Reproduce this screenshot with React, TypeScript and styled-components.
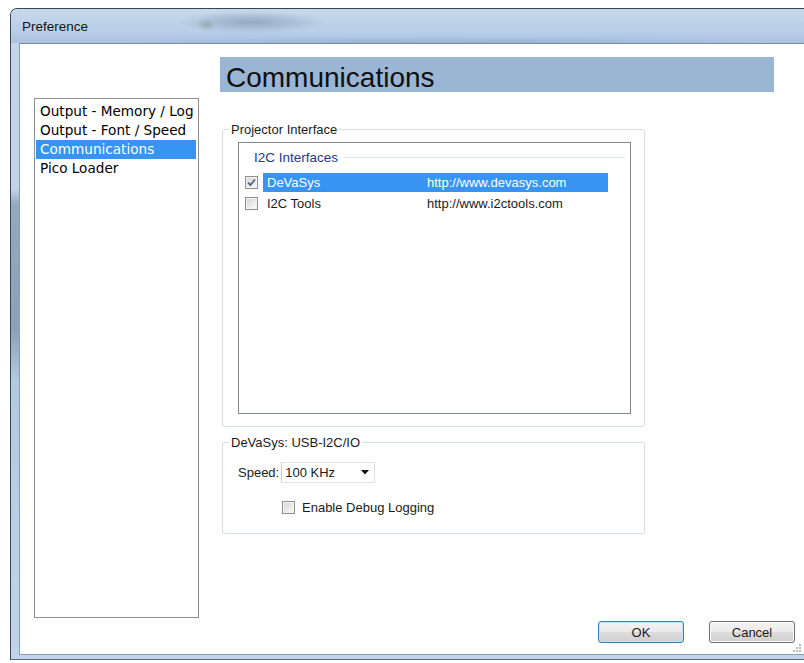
import styled, { createGlobalStyle } from "styled-components";

const GlobalStyle = createGlobalStyle`
  html, body {
    margin: 0;
    padding: 0;
    background: #ffffff;
  }
  body {
    width: 804px;
    height: 663px;
    overflow: hidden;
    font-family: "Liberation Sans", Arial, sans-serif;
    color: #1b1b1b;
  }
`;

const Window = styled.div`
  margin: 8px 0 0 10px;
  width: 794px;
  height: 652px;
  box-sizing: border-box;
  display: flex;
  flex-direction: column;
  border-top: 1px solid #3a4452;
  border-left: 1px solid #3a4452;
  border-bottom: 1px solid #5a6a80;
  border-top-left-radius: 7px;
  overflow: hidden;
  background: linear-gradient(
    to bottom,
    #c2d5ea 0px,
    #c0d4ea 180px,
    #93a8c1 196px,
    #8ba1bb 320px,
    #b2c9e4 372px,
    #bfd4ec 100%
  );
`;

const TitleBar = styled.div`
  height: 34px;
  flex: none;
  display: flex;
  align-items: center;
  padding: 1px 0 0 11px;
  box-sizing: border-box;
  font-size: 13.5px;
  color: #141414;
  background:
    radial-gradient(ellipse 75px 11px at 240px 13px, rgba(85, 108, 132, 0.4), transparent),
    radial-gradient(ellipse 9px 6px at 195px 16px, rgba(100, 135, 85, 0.35), transparent),
    radial-gradient(ellipse 330px 9px at 430px 36px, rgba(105, 140, 188, 0.38), transparent),
    linear-gradient(to bottom, #c6d8ec 0%, #b9cfe8 65%, #a9c2df 100%);
`;

const Client = styled.div`
  position: relative;
  flex: 1;
  display: flex;
  flex-direction: column;
  margin: 0 0 4px 8px;
  border-top: 1px solid #7b8ca2;
  border-left: 1px solid #8a9cb2;
  border-bottom: 1px solid #8a9cb2;
  background: #ffffff;
`;

const Body = styled.div`
  display: flex;
  align-items: flex-start;
  padding-left: 14px;
`;

const PageList = styled.div`
  width: 165px;
  height: 520px;
  margin-top: 54px;
  box-sizing: border-box;
  border: 1px solid #8d9096;
  padding: 3px 2px 0 1px;
  font-family: "DejaVu Sans", Verdana, sans-serif;
  font-size: 13.6px;
`;

const PageItem = styled.div<{ $selected?: boolean }>`
  height: 19px;
  line-height: 19px;
  padding-left: 4px;
  white-space: nowrap;
  color: ${(p) => (p.$selected ? "#ffffff" : "#000000")};
  background: ${(p) => (p.$selected ? "#3894f2" : "transparent")};
`;

const Main = styled.div`
  width: 554px;
  margin: 13px 0 0 21px;
  display: flex;
  flex-direction: column;
`;

const Header = styled.div`
  height: 35px;
  box-sizing: border-box;
  padding: 6px 0 0 6px;
  line-height: 29px;
  font-size: 28px;
  color: #101010;
  background: #9bb5d4;
`;

const Group = styled.div<{ $height: number; $top: number }>`
  position: relative;
  width: 423px;
  height: ${(p) => p.$height}px;
  margin: ${(p) => p.$top}px 0 0 2px;
  box-sizing: border-box;
  border: 1px solid #d6dde3;
  border-radius: 3px;
  display: flex;
  flex-direction: column;
`;

const Legend = styled.span`
  position: absolute;
  top: -8px;
  left: 6px;
  padding: 0 2px;
  line-height: 16px;
  font-size: 13px;
  background: #ffffff;
  color: #1b1b1b;
`;

const ListPanel = styled.div`
  margin: 12px 13px 0 15px;
  height: 272px;
  box-sizing: border-box;
  border: 1px solid #84888f;
  display: flex;
  flex-direction: column;
  font-size: 13px;
`;

const ListGroupHeader = styled.div`
  height: 29px;
  display: flex;
  align-items: center;
  gap: 6px;
  padding: 0 5px 0 15px;
  color: #1e3a8a;
  font-size: 13.5px;
`;

const HeaderRule = styled.div`
  flex: 1;
  height: 1px;
  background: #dfe4ea;
`;

const ListRow = styled.div`
  height: 21px;
  display: flex;
  align-items: center;
  padding-left: 6px;
`;

const RowCell = styled.div<{ $selected?: boolean }>`
  width: 345px;
  height: 19px;
  margin-left: 5px;
  padding-left: 4px;
  box-sizing: border-box;
  display: flex;
  align-items: center;
  color: ${(p) => (p.$selected ? "#ffffff" : "#1b1b1b")};
  background: ${(p) => (p.$selected ? "#3894f2" : "transparent")};
`;

const NameCol = styled.span`
  width: 160px;
  flex: none;
`;

const Box = styled.span`
  width: 13px;
  height: 13px;
  flex: none;
  box-sizing: border-box;
  border: 1px solid #8f8f8f;
  background: linear-gradient(135deg, #d3d3d3 0%, #ececec 60%, #fafafa 100%);
  box-shadow: inset 0 0 0 1px #f4f4f4;
  display: flex;
  align-items: center;
  justify-content: center;
`;

const SpeedRow = styled.div`
  display: flex;
  align-items: center;
  gap: 2px;
  margin: 19px 0 0 15px;
  font-size: 13px;
`;

const Combo = styled.div`
  width: 94px;
  height: 21px;
  box-sizing: border-box;
  border: 1px solid #e1e1e1;
  border-left-color: #cfcfcf;
  display: flex;
  align-items: center;
  justify-content: space-between;
  padding: 0 5px 0 3px;
  background: #ffffff;
`;

const CheckRow = styled.label`
  display: flex;
  align-items: center;
  gap: 7px;
  margin: 17px 0 0 59px;
  font-size: 13px;
`;

const Footer = styled.div`
  display: flex;
  justify-content: flex-end;
  gap: 25px;
  margin-top: 3px;
  padding-right: 9px;
`;

const Button = styled.button<{ $default?: boolean }>`
  width: 86px;
  height: 22px;
  box-sizing: border-box;
  border: 1px solid ${(p) => (p.$default ? "#3c7fb1" : "#707070")};
  border-radius: 3px;
  font-family: "Liberation Sans", Arial, sans-serif;
  font-size: 13px;
  color: #1b1b1b;
  padding: 0;
  background: linear-gradient(to bottom, #f2f2f2 0%, #ebebeb 50%, #dddddd 51%, #cfcfcf 100%);
  box-shadow: inset 0 0 0 1px ${(p) => (p.$default ? "#bde4f8" : "#fbfbfb")};
`;

const Grip = styled.svg`
  position: absolute;
  right: 3px;
  bottom: 2px;
`;

function CheckBox({ checked }: { checked?: boolean }) {
  return (
    <Box>
      {checked && (
        <svg width="9" height="9" viewBox="0 0 9 9">
          <path d="M1 4.6 L3.4 7 L8 1.5" fill="none" stroke="#4b5f84" strokeWidth="1.8" />
        </svg>
      )}
    </Box>
  );
}

const interfaces = [
  { name: "DeVaSys", url: "http://www.devasys.com", checked: true, selected: true },
  { name: "I2C Tools", url: "http://www.i2ctools.com", checked: false, selected: false },
];

const pages = ["Output - Memory / Log", "Output - Font / Speed", "Communications", "Pico Loader"];

export default function App() {
  return (
    <>
      <GlobalStyle />
      <Window>
        <TitleBar>Preference</TitleBar>
        <Client>
          <Body>
            <PageList>
              {pages.map((p) => (
                <PageItem key={p} $selected={p === "Communications"}>
                  {p}
                </PageItem>
              ))}
            </PageList>
            <Main>
              <Header>Communications</Header>
              <Group $height={298} $top={37}>
                <Legend>Projector Interface</Legend>
                <ListPanel>
                  <ListGroupHeader>
                    <span>I2C Interfaces</span>
                    <HeaderRule />
                  </ListGroupHeader>
                  {interfaces.map((it) => (
                    <ListRow key={it.name}>
                      <CheckBox checked={it.checked} />
                      <RowCell $selected={it.selected}>
                        <NameCol>{it.name}</NameCol>
                        <span>{it.url}</span>
                      </RowCell>
                    </ListRow>
                  ))}
                </ListPanel>
              </Group>
              <Group $height={92} $top={15}>
                <Legend>DeVaSys: USB-I2C/IO</Legend>
                <SpeedRow>
                  <span>Speed:</span>
                  <Combo>
                    <span>100 KHz</span>
                    <svg width="8" height="5" viewBox="0 0 8 5">
                      <path d="M0 0 H8 L4 4.5 Z" fill="#111" />
                    </svg>
                  </Combo>
                </SpeedRow>
                <CheckRow>
                  <CheckBox />
                  <span>Enable Debug Logging</span>
                </CheckRow>
              </Group>
            </Main>
          </Body>
          <Footer>
            <Button $default>OK</Button>
            <Button>Cancel</Button>
          </Footer>
          <Grip width="10" height="10" viewBox="0 0 10 10">
            <g fill="#b9bec6">
              <rect x="8" y="2" width="2" height="2" />
              <rect x="5" y="5" width="2" height="2" />
              <rect x="8" y="5" width="2" height="2" />
              <rect x="2" y="8" width="2" height="2" />
              <rect x="5" y="8" width="2" height="2" />
              <rect x="8" y="8" width="2" height="2" />
            </g>
          </Grip>
        </Client>
      </Window>
    </>
  );
}
